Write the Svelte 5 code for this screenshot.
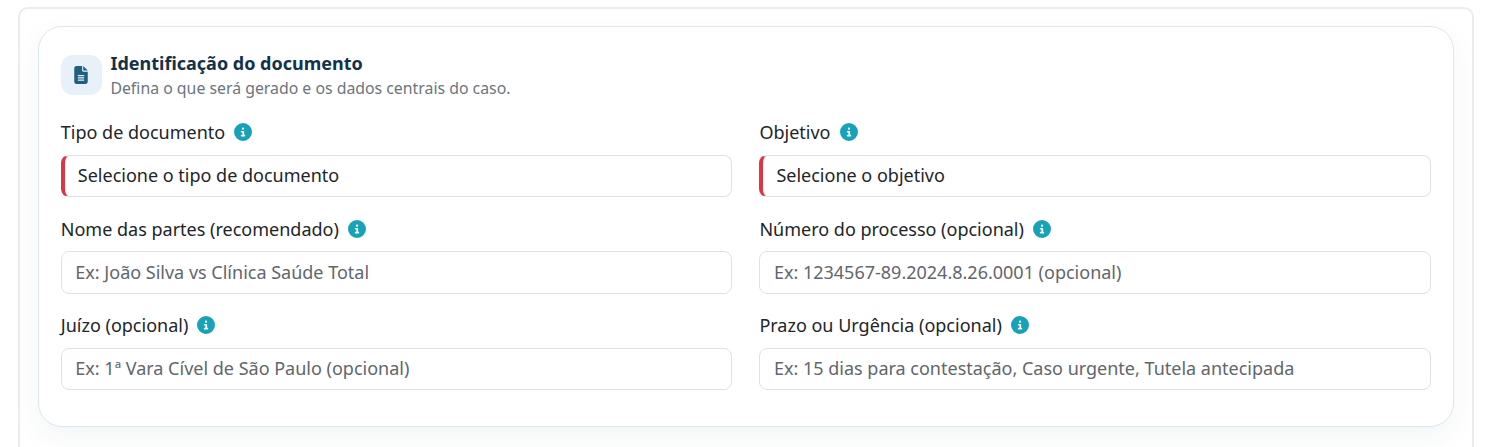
<script>
	const rows = [
		[
			{ label: 'Tipo de documento', value: 'Selecione o tipo de documento', required: true },
			{ label: 'Objetivo', value: 'Selecione o objetivo', required: true }
		],
		[
			{ label: 'Nome das partes (recomendado)', value: 'Ex: João Silva vs Clínica Saúde Total' },
			{ label: 'Número do processo (opcional)', value: 'Ex: 1234567-89.2024.8.26.0001 (opcional)' }
		],
		[
			{ label: 'Juízo (opcional)', value: 'Ex: 1ª Vara Cível de São Paulo (opcional)' },
			{ label: 'Prazo ou Urgência (opcional)', value: 'Ex: 15 dias para contestação, Caso urgente, Tutela antecipada' }
		]
	];
	const fields = rows.flat();
</script>

<div class="page">
	<section class="outer">
		<div class="card">
			<header class="head">
				<div class="badge">
					<svg width="14" height="18" viewBox="0 0 384 512" fill="currentColor">
						<path d="M64 0C28.700 0 0 28.700 0 64V448c0 35.300 28.700 64 64 64H320c35.300 0 64-28.700 64-64V160H256c-17.700 0-32-14.300-32-32V0H64zM256 0V128H384L256 0zM112 256H272c8.800 0 16 7.200 16 16s-7.200 16-16 16H112c-8.800 0-16-7.200-16-16s7.200-16 16-16zm0 64H272c8.800 0 16 7.200 16 16s-7.200 16-16 16H112c-8.800 0-16-7.200-16-16s7.200-16 16-16zm0 64H272c8.800 0 16 7.200 16 16s-7.200 16-16 16H112c-8.800 0-16-7.200-16-16s7.200-16 16-16z" />
					</svg>
				</div>
				<div class="titles">
					<h2>Identificação do documento</h2>
					<p>Defina o que será gerado e os dados centrais do caso.</p>
				</div>
			</header>

			<div class="grid">
				{#each fields as field}
					<div class="field">
						<div class="label">
							<span>{field.label}</span>
							<svg width="18" height="18" viewBox="0 0 512 512" fill="currentColor">
								<path d="M256 512A256 256 0 1 0 256 0a256 256 0 1 0 0 512zM216 336h24V272H216c-13.300 0-24-10.700-24-24s10.700-24 24-24h48c13.300 0 24 10.700 24 24v88h8c13.300 0 24 10.700 24 24s-10.700 24-24 24H216c-13.300 0-24-10.700-24-24s10.700-24 24-24zm40-208a32 32 0 1 1 0 64 32 32 0 1 1 0-64z" />
							</svg>
						</div>
						<div class="input" class:required={field.required}>{field.value}</div>
					</div>
				{/each}
			</div>
		</div>
	</section>
</div>

<style>
	:global(body) {
		background: #ffffff;
		font-family: 'Noto Sans', sans-serif;
	}

	.page {
		height: 447px;
		overflow: hidden;
		padding: 7px 28px 0 18px;
		box-sizing: border-box;
	}

	.outer {
		background: #ffffff;
		border: 2px solid #e9edf2;
		border-radius: 10px;
		padding: 17px 18px 60px;
	}

	.card {
		background: #ffffff;
		border: 1px solid #dbe8f1;
		border-radius: 24px;
		padding: 23.6px 22px 36px 21.8px;
		box-shadow: 0 10px 30px rgba(20, 50, 80, 0.05);
	}

	.head {
		display: flex;
		gap: 8.6px;
		align-items: center;
		margin-bottom: 19px;
	}

	.badge {
		width: 41px;
		height: 40px;
		flex: none;
		display: flex;
		align-items: center;
		justify-content: center;
		border-radius: 12px;
		background: #e8f1f9;
		color: #1f5f7f;
	}

	h2 {
		margin: 0;
		font-size: 18px;
		line-height: 24px;
		font-weight: 700;
		color: #12324a;
	}

	p {
		margin: 1px 0 0;
		font-size: 15.84px;
		line-height: 24px;
		color: #6c757d;
	}

	.grid {
		display: grid;
		grid-template-columns: 1fr 1fr;
		column-gap: 27px;
		row-gap: 18px;
	}

	.label {
		display: flex;
		align-items: center;
		gap: 9px;
		height: 27px;
		margin-bottom: 9px;
		font-size: 18px;
		color: #212529;
	}

	.label svg {
		color: #17a2b8;
	}

	.input {
		height: 42.5px;
		box-sizing: border-box;
		display: flex;
		align-items: center;
		padding: 0 13.5px 1px;
		background: #ffffff;
		border: 1px solid #dee2e6;
		border-radius: 8px;
		font-size: 18px;
		color: #5f666d;
	}

	.input.required {
		border-left: 4px solid #dc3545;
		padding-left: 13px;
		color: #212529;
	}
</style>
